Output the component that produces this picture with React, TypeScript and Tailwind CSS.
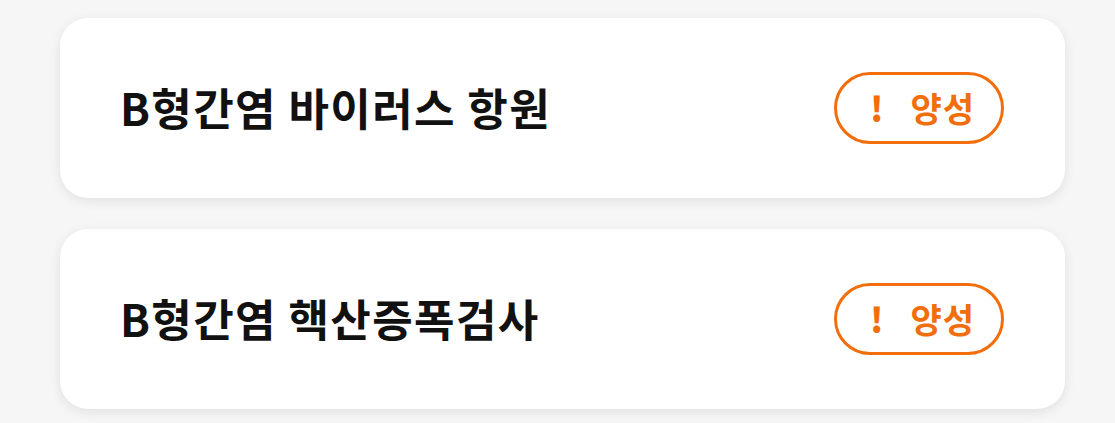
import React from "react";

const items = ["B형간염 바이러스 항원", "B형간염 핵산증폭검사"];

export default function App() {
  return (
    <div
      className="w-[1115px] h-[423px] bg-[#f6f6f6] pt-[18px] pl-[60px] flex flex-col gap-[31px]"
      style={{ fontFamily: '"Noto Sans CJK KR", "Noto Sans", sans-serif' }}
    >
      {items.map((t) => (
        <div
          key={t}
          className="w-[1005px] h-[180px] bg-white rounded-[28px] shadow-[0_3px_12px_rgba(0,0,0,0.09)] flex items-center justify-between pl-[60px] pr-[61px]"
        >
          <div className="text-[44px] font-bold text-[#111] leading-none tracking-[1.4px] pb-[2px]">{t}</div>
          <div className="w-[170px] h-[72px] rounded-full border-[3px] border-[#f26d0c] flex items-center pl-[33px] gap-[27px] text-[#f26d0c] font-bold text-[34px] leading-none">
            <span className="font-black">!</span>
            <span className="tracking-[1px]">양성</span>
          </div>
        </div>
      ))}
    </div>
  );
}
